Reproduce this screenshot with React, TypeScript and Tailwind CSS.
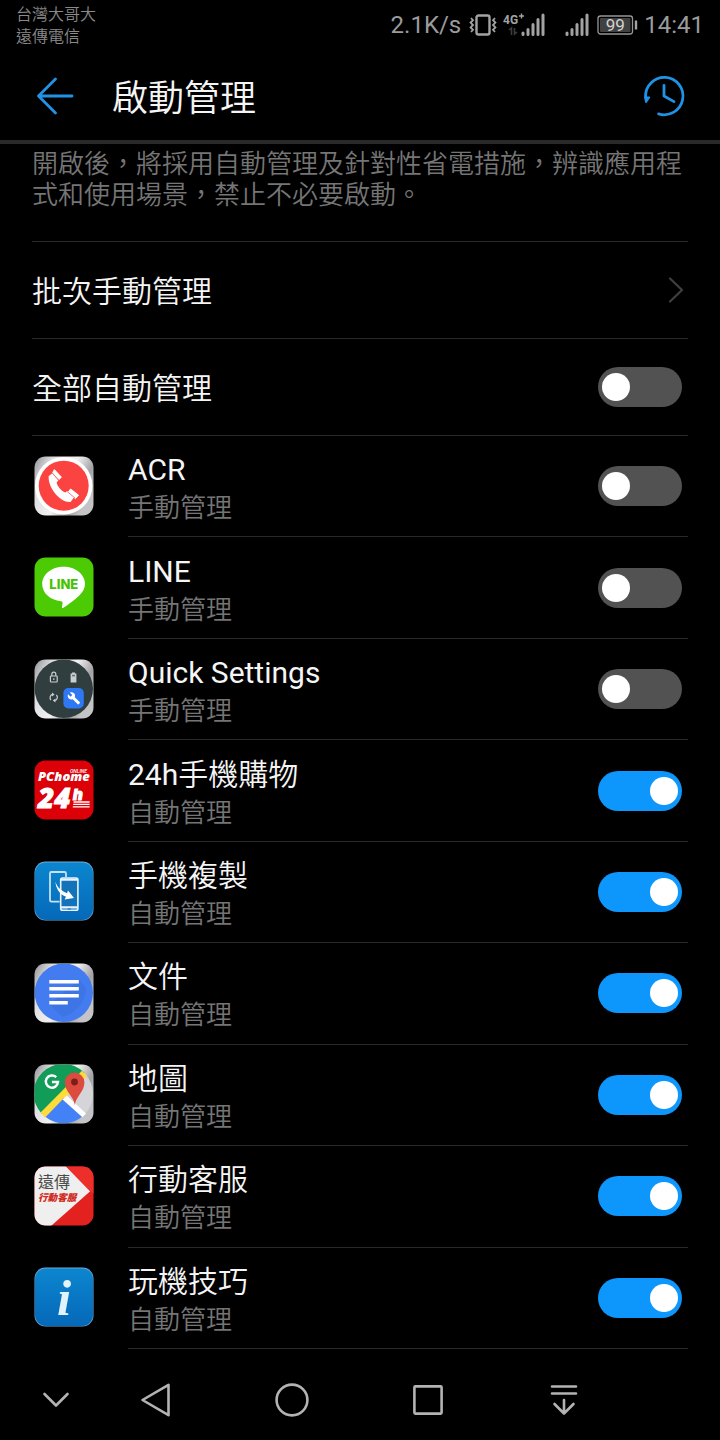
import { useId, useState, type ReactNode } from 'react';

type AppEntry = {
  name: string;
  auto: boolean;
  icon: ReactNode;
};

function IconTile({ fill, children }: { fill?: string; children: ReactNode }) {
  const id = useId();
  return (
    <svg className="size-15 shrink-0" viewBox="0 0 60 60" aria-hidden="true">
      <defs>
        <clipPath id={`${id}c`}>
          <rect x="0.5" y="0.5" width="59" height="59" rx="11" />
        </clipPath>
        <linearGradient id={`${id}m`} x1="0" y1="0" x2="1" y2="0.5">
          <stop offset="0" stopColor="#8d8e91" />
          <stop offset="0.25" stopColor="#dcdcdf" />
          <stop offset="0.6" stopColor="#f1f1f3" />
          <stop offset="0.85" stopColor="#a2a2a6" />
          <stop offset="1" stopColor="#c4c4c6" />
        </linearGradient>
      </defs>
      <g clipPath={`url(#${id}c)`}>
        <rect width="60" height="60" fill={fill ?? `url(#${id}m)`} />
        {children}
      </g>
    </svg>
  );
}

function BlueTile({ children }: { children: ReactNode }) {
  const id = useId();
  return (
    <IconTile fill="#69a9d4">
      <defs>
        <linearGradient id={id} x1="0" y1="0" x2="0" y2="1">
          <stop offset="0" stopColor="#0c86cf" />
          <stop offset="1" stopColor="#0569b8" />
        </linearGradient>
      </defs>
      <rect x="1" y="1.4" width="58" height="57.6" rx="11" fill={`url(#${id})`} />
      {children}
    </IconTile>
  );
}

const acrIcon = (
  <IconTile>
    <circle cx="29.7" cy="29.7" r="28.7" fill="#fff" />
    <circle cx="29.7" cy="29.7" r="25" fill="#fb4441" />
    <path d="M14.6 20.2 18.6 17 24.6 24 22.6 26.6C23.4 30.4 27 34.6 31.2 36.6L33.4 34.9 40.6 40.6 36.6 45.9C27 47 14.2 33 14.6 20.2Z" fill="#fff" />
    <path d="M20.4 13.6 27.4 21.2 25 23.4 18.8 16.4ZM36.6 33 44.6 39.2 41.4 42.6 33.8 36.6Z" fill="#fff" stroke="#fff" strokeLinejoin="round" />
    <path d="M18.2 17 24.6 24.4M33.2 35.6 41 42" stroke="#fb4441" strokeWidth="0.7" />
  </IconTile>
);

const lineIcon = (
  <IconTile fill="#4ccb04">
    <path d="M29.6 9.8C41.6 9.8 51 17.4 51 26.8 51 31 49 34.6 46 37.8 41.6 42.4 34.6 47.4 29.4 50.8 28.4 51.4 27.8 50.9 28 49.9L28.6 45.9C28.6 44.9 28.2 44.4 27 44.2 16.2 43 8.2 36 8.2 26.9 8.2 17.4 17.6 9.8 29.6 9.8Z" fill="#fff" />
    <text x="29.8" y="32" textAnchor="middle" fontFamily="Inter, sans-serif" fontSize="13" fontWeight="800" fill="#45c200">LINE</text>
  </IconTile>
);

const quickSettingsIcon = (
  <IconTile>
    <circle cx="29.8" cy="29.8" r="29.2" fill="#303e40" />
    <g fill="none" stroke="#c9cfd0" strokeWidth="1.2">
      <rect x="16.4" y="17" width="6.8" height="6" rx="0.8" />
      <path d="M17.8 17V15.2A2 2 0 0 1 21.8 15.2V17M19.8 19.2V21" />
      <path d="M17 41A3.4 3.4 0 0 1 18.4 35.4M22.4 36A3.4 3.4 0 0 1 21 41.6" />
    </g>
    <path d="M18 33.4 20.6 35.5 18 37.4ZM21.4 39.6 18.8 41.5 21.4 43.6Z" fill="#c9cfd0" />
    <path d="M36.6 14.6H38V13.4H41V14.6H42.4V23.4H36.6Z" fill="#c9cfd0" />
    <rect x="38" y="15.8" width="3" height="1.6" fill="#6d7577" />
    <rect x="29.4" y="29" width="20.4" height="20.4" rx="5" fill="#2f78f3" />
    <path transform="translate(33.2 32.6) scale(.56)" d="M22.7 19 13.6 9.9C14.5 7.6 14 4.9 12.1 3 10.1 1 7.1.6 4.7 1.7L9 6 6 9 1.6 4.7C.4 7.1.9 10.1 2.9 12.1 4.8 14 7.5 14.5 9.8 13.6L18.9 22.7C19.3 23.1 19.9 23.1 20.3 22.7L22.6 20.4C23.1 20 23.1 19.3 22.7 19Z" fill="#fff" />
  </IconTile>
);

const pchomeIcon = (
  <IconTile fill="#dc0008">
    <g fill="#fff" fontStyle="italic">
      <text x="36" y="13" fontFamily="Roboto, sans-serif" fontSize="5" fontWeight="500">ONLINE</text>
      <text x="4" y="21.4" fontFamily="Open Sans, sans-serif" fontSize="13" fontWeight="800">PChome</text>
      <text x="4" y="47.6" fontFamily="Open Sans, sans-serif" fontSize="28" fontWeight="800" stroke="#fff" strokeWidth="0.8">24</text>
      <text x="39" y="39.6" fontFamily="Inter, sans-serif" fontSize="15" fontWeight="900" stroke="#fff" strokeWidth="1">h</text>
    </g>
    <path d="M39.5 42H55.6M39.2 44.4H55.6M38.8 46.8H55.6" stroke="#fff" strokeWidth="1.3" />
  </IconTile>
);

const phoneCloneIcon = (
  <BlueTile>
    <path d="M25.6 40.6H17.4Q16 40.6 16 39V12.4Q16 11 17.4 11H30.4Q32 11 32 12.4V16" fill="none" stroke="#c4e2f4" strokeWidth="1.8" />
    <rect x="26.7" y="17" width="17.2" height="32.2" rx="1.8" fill="#1272ba" stroke="#e7f4fc" strokeWidth="1.6" />
    <path d="M27 18.6H43.8M27 46.4H43.8" stroke="#e7f4fc" strokeWidth="2.2" />
    <path d="M33.6 48H37" stroke="#1272ba" strokeWidth="1.1" />
    <path d="M21.5 20.6C23 26.6 27.4 30 33 32.2L34 29.4 40 36.9 30.6 38.4 32 35.8C26 33.6 21.6 27.6 21.5 20.6Z" fill="#fff" />
  </BlueTile>
);

const docsIcon = (
  <IconTile>
    <circle cx="29.8" cy="29.8" r="29.2" fill="#437cf0" />
    <path d="M44.8 17 52 24.4C52 36 44 50 28 54L15.4 41.2Z" fill="#3e75e4" />
    <path d="M15.3 18.7H44.8M15.3 25.7H44.8M15.3 32.7H44.8M15.3 39.7H33.8" stroke="#fff" strokeWidth="3.4" />
  </IconTile>
);

const mapsIcon = (
  <IconTile>
    <circle cx="29.8" cy="29.8" r="29.2" fill="#d5d4d8" />
    <path d="M8 50A29.2 29.2 0 0 1 50.4 8.8Z" fill="#119c58" />
    <path d="M6.6 48.4 48 6.8 53.2 12 11 53.6Z" fill="#fcdb3b" />
    <path d="M11.6 52.9 30.2 33.8 49 52A29.2 29.2 0 0 1 11.6 52.9Z" fill="#4382f6" />
    <path d="M28.6 35.4 32.6 31.4 52 49.6 48.4 53.2Z" fill="#fff" />
    <path d="M40.8 41C40 32.6 30.8 27.6 30.8 18.4A9.8 9.8 0 0 1 50.4 18.4C50.4 27.6 41.8 32.6 40.8 41Z" fill="#dd4b3e" />
    <circle cx="40.5" cy="18" r="3.4" fill="#7a1f1a" />
    <path d="M22.2 13.2A6.1 6.1 0 1 0 24 18H17.9" fill="none" stroke="#fff" strokeWidth="2.5" />
  </IconTile>
);

const fetIcon = (
  <IconTile fill="#e3211f">
    <path d="M0 0H31.6L56.2 25.2 17 60H0Z" fill="#efefef" />
    <path d="M31.6 0H60V28L56.2 25.2Z" fill="#ec2f2a" />
    <text x="4" y="22" fontFamily="Liberation Sans, Noto Sans CJK TC, sans-serif" fontSize="16" fill="#4b4b4b">遠傳</text>
    <text x="4" y="34.8" fontFamily="Liberation Sans, Noto Sans CJK TC, sans-serif" fontSize="9.6" fontWeight="900" fontStyle="italic" fill="#d12a20">行動客服</text>
  </IconTile>
);

const tipsIcon = (
  <BlueTile>
    <text x="23" y="47.6" fontFamily="Liberation Serif, serif" fontSize="51" fontWeight="700" fontStyle="italic" fill="#e2f3fc">i</text>
  </BlueTile>
);

const apps: AppEntry[] = [
  { name: 'ACR', auto: false, icon: acrIcon },
  { name: 'LINE', auto: false, icon: lineIcon },
  { name: 'Quick Settings', auto: false, icon: quickSettingsIcon },
  { name: '24h手機購物', auto: true, icon: pchomeIcon },
  { name: '手機複製', auto: true, icon: phoneCloneIcon },
  { name: '文件', auto: true, icon: docsIcon },
  { name: '地圖', auto: true, icon: mapsIcon },
  { name: '行動客服', auto: true, icon: fetIcon },
  { name: '玩機技巧', auto: true, icon: tipsIcon },
];

function Switch({ id, checked, onChange }: { id: string; checked: boolean; onChange: (value: boolean) => void }) {
  return (
    <input
      id={id}
      type="checkbox"
      role="switch"
      checked={checked}
      onChange={(event) => onChange(event.target.checked)}
      className="flex h-10 w-21 shrink-0 cursor-pointer appearance-none items-center rounded-full bg-[#525252] px-1 before:size-7 before:rounded-full before:bg-white before:content-[''] checked:justify-end checked:bg-[#0d96fb]"
    />
  );
}

function SignalBars() {
  return (
    <svg className="h-6 w-6" viewBox="0 0 24 24" aria-hidden="true">
      <path d="M2 20V21.5M7 16.5V21.5M12 11.5V21.5M17 6.5V21.5M22 2V21.5" stroke="#a3a3a3" strokeWidth="3" strokeLinecap="round" />
    </svg>
  );
}

function StatusBar() {
  return (
    <div className="flex h-[50px] items-center justify-between px-4 text-[#9b9b9b]">
      <div className="pt-0.5 text-base leading-[22px] text-[#8a8a8a]">
        <p>台灣大哥大</p>
        <p>遠傳電信</p>
      </div>
      <div className="flex items-center text-2xl">
        <span>2.1K/s</span>
        <svg className="ml-2 h-6 w-7" viewBox="0 0 28 24" fill="none" stroke="#a3a3a3" aria-hidden="true">
          <rect x="7.5" y="2.5" width="13" height="19" rx="2" strokeWidth="2.4" />
          <path d="M2 5 4 7.2 1.6 9.6 4 12 1.6 14.4 4 16.8 2 19M26 5 24 7.2 26.4 9.6 24 12 26.4 14.4 24 16.8 26 19" strokeWidth="1.8" />
        </svg>
        <div className="ml-2 flex">
          <svg className="h-6 w-4 overflow-visible" viewBox="0 0 16 24" aria-hidden="true">
            <text x="-2" y="10.5" fontFamily="Roboto, sans-serif" fontSize="12" fontWeight="700" fill="#a3a3a3">4G</text>
            <path d="M16.5 0.5V5.5M14 3H19" stroke="#a3a3a3" strokeWidth="1.4" />
            <path d="M4 17 6.5 15V22M9.5 15V21L12 19" fill="none" stroke="#3c3c3c" strokeWidth="1.6" />
          </svg>
          <SignalBars />
        </div>
        <div className="ml-5">
          <SignalBars />
        </div>
        <svg className="ml-2 h-6 w-[41px]" viewBox="0 0 41 24" aria-hidden="true">
          <rect x="1" y="3" width="34.5" height="18" rx="2.5" fill="none" stroke="#969696" strokeWidth="1.3" />
          <rect x="3" y="5" width="30.5" height="14" rx="1" fill="#414141" />
          <path d="M39 7.5V16.5" stroke="#a3a3a3" strokeWidth="2.4" />
          <text x="18.3" y="18" textAnchor="middle" fontFamily="Roboto, sans-serif" fontSize="17" fill="#d2d2d2">99</text>
        </svg>
        <span className="ml-1.5">14:41</span>
      </div>
    </div>
  );
}

function AppRow({ app }: { app: AppEntry }) {
  const [auto, setAuto] = useState(app.auto);
  const id = useId();
  return (
    <li className="flex flex-1 items-stretch pl-[34px]">
      <div className="flex items-center pb-0.5">{app.icon}</div>
      <div className="mr-8 ml-[34px] flex flex-1 items-center justify-between border-b border-[#292929] pr-1.5">
        <label htmlFor={id} className="cursor-pointer pt-1">
          <span className="block text-[30px] leading-[40px]">{app.name}</span>
          <span className="block text-[26px] leading-[36px] text-[#757575]">{auto ? '自動管理' : '手動管理'}</span>
        </label>
        <Switch id={id} checked={auto} onChange={setAuto} />
      </div>
    </li>
  );
}

function NavButton({ label, children }: { label: string; children: ReactNode }) {
  return (
    <button aria-label={label} className="flex h-full w-16 cursor-pointer items-center justify-center not-first:flex-1">
      <svg className="size-9" viewBox="0 0 36 36" fill="none" stroke="#b3b3b3" strokeWidth="2.6" strokeLinecap="round" strokeLinejoin="round">
        {children}
      </svg>
    </button>
  );
}

function NavigationBar() {
  return (
    <nav className="flex h-[91px] items-center pt-2.5 pr-22 pl-6">
      <NavButton label="隱藏導覽列">
        <path d="M6.5 12 18 23.5 29.5 12" />
      </NavButton>
      <NavButton label="返回">
        <path d="M30.5 2.8V33.2L4.5 18Z" />
      </NavButton>
      <NavButton label="主畫面">
        <circle cx="18" cy="18" r="15.4" />
      </NavButton>
      <NavButton label="最近使用">
        <rect x="4.4" y="4.4" width="27.2" height="27.2" rx="1" />
      </NavButton>
      <NavButton label="通知面板">
        <path d="M6 4.5H30M6 11.5H30M18 18V31.5M8.5 22 18 31.5 27.5 22" />
      </NavButton>
    </nav>
  );
}

export default function App() {
  const [allAuto, setAllAuto] = useState(false);
  return (
    <div lang="zh-Hant" className="flex min-h-screen flex-col bg-black font-[Roboto,'Noto_Sans_CJK_TC_DemiLight','Noto_Sans_CJK_TC_Light','Noto_Sans_CJK_TC',sans-serif] font-normal text-[#f5f5f5]">
      <StatusBar />
      <header className="flex h-[94px] items-center border-b-4 border-[#292929] px-[34px] pt-0.5">
        <button aria-label="返回" className="cursor-pointer">
          <svg className="size-11" viewBox="0 0 44 44" fill="none" stroke="#1f93e6" strokeWidth="2.8" strokeLinecap="round" strokeLinejoin="round">
            <path d="M21.5 5 4.5 22 21.5 39M4.5 22H38" />
          </svg>
        </button>
        <h1 className="ml-[34px] flex-1 pt-1.5 text-4xl">啟動管理</h1>
        <button aria-label="歷史記錄" className="cursor-pointer">
          <svg className="size-11" viewBox="0 0 44 44" fill="none" stroke="#1f93e6" strokeWidth="2.8" strokeLinecap="round" strokeLinejoin="round">
            <path d="M3.6 23A18.7 18.7 0 1 1 16.6 39.9M22 11.5V22L32 27.6" />
            <path d="M2.8 23.4H7.4L4 28.2Z" fill="#1f93e6" strokeWidth="1.6" />
          </svg>
        </button>
      </header>
      <main className="flex flex-1 flex-col">
        <section className="mx-8 border-b border-[#292929]">
          <p className="pt-[5px] pb-[30px] text-[26px] leading-[31px] text-[#757575]">
            開啟後，將採用自動管理及針對性省電措施，辨識應用程式和使用場景，禁止不必要啟動。
          </p>
        </section>
        <a href="#batch" className="mx-8 flex h-[97px] items-center justify-between border-b border-[#292929]">
          <span className="pt-0.5 text-[30px]">批次手動管理</span>
          <svg className="h-9 w-6" viewBox="0 0 24 36" fill="none" stroke="#404040" strokeWidth="2.2" strokeLinecap="round" strokeLinejoin="round" aria-hidden="true">
            <path d="M6 6.5 18 18 6 29.5" />
          </svg>
        </a>
        <div className="mx-8 flex h-[97px] items-center justify-between border-b border-[#292929] pr-1.5">
          <label htmlFor="all-auto" className="cursor-pointer pt-0.5 text-[30px]">全部自動管理</label>
          <Switch id="all-auto" checked={allAuto} onChange={setAllAuto} />
        </div>
        <ul className="flex flex-1 flex-col">
          {apps.map((app) => (
            <AppRow key={app.name} app={app} />
          ))}
        </ul>
      </main>
      <NavigationBar />
    </div>
  );
}
